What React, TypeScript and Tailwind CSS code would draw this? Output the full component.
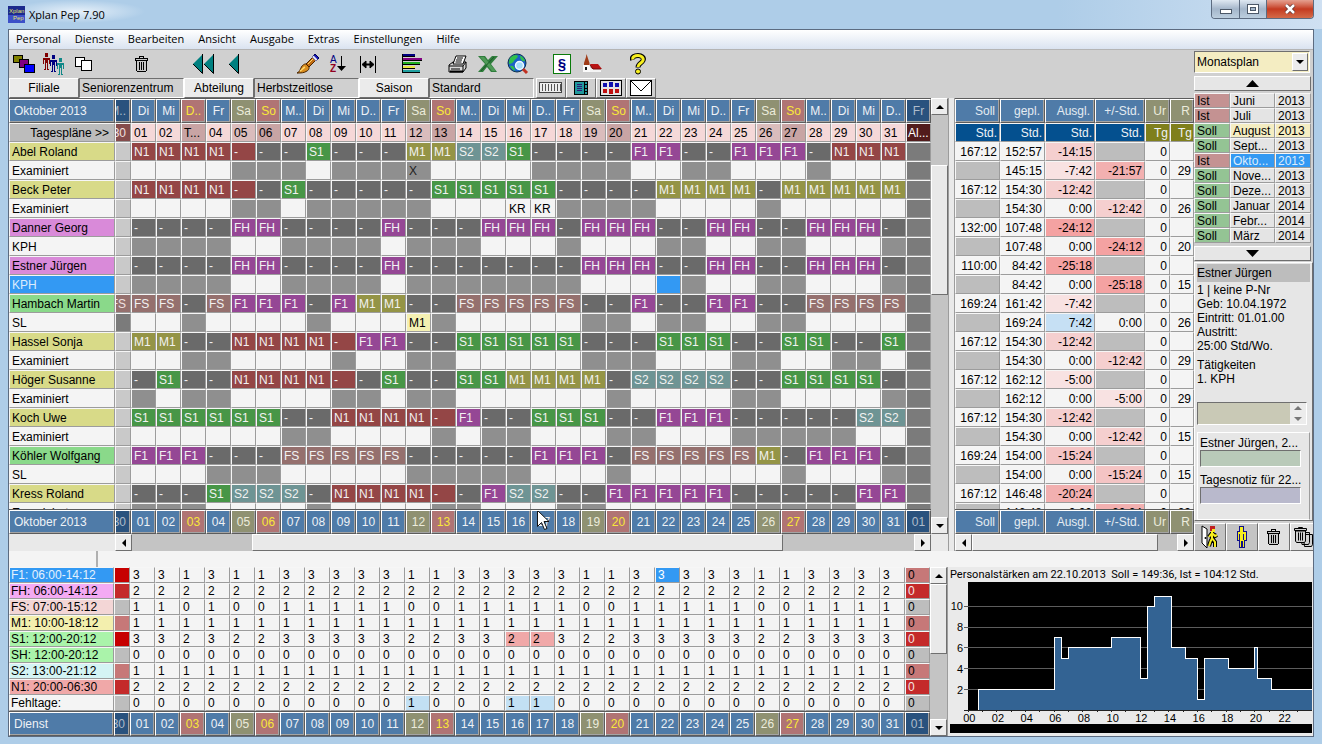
import type { ReactNode } from 'react';

const DAYS = Array.from({ length: 31 }, (_, i) => i + 1);
const WEEKDAYS = ['M..', 'Di', 'Mi', 'D..', 'Fr', 'Sa', 'So'];

const pad = (n: number) => String(n).padStart(2, '0');

type DayKind = 'work' | 'sat' | 'sun';

const dayKind = (day: number): DayKind => {
  const wd = day % 7;
  if (day === 3 || wd === 6) return 'sun';
  if (wd === 5) return 'sat';
  return 'work';
};

const headColor: Record<DayKind, string> = {
  work: 'bg-[#4f7ba8] text-[#eef2f6]',
  sat: 'bg-[#8f9172] text-[#ececdc]',
  sun: 'bg-[#b07474] text-[#f8e838]',
};

const dateColor: Record<DayKind, string> = {
  work: 'bg-[#f5d8d8]',
  sat: 'bg-[#dabcbc]',
  sun: 'bg-[#c8a4a4]',
};

const dutyColor: Record<string, string> = {
  N1: 'bg-[#944646]',
  r: 'bg-[#944646]',
  S1: 'bg-[#479647]',
  S2: 'bg-[#6e9494]',
  F1: 'bg-[#954795]',
  FH: 'bg-[#954795]',
  FS: 'bg-[#95706e]',
  M1: 'bg-[#949446]',
  '-': 'bg-[#6a6a6a]',
};

type Person = {
  name: string;
  role: string;
  color: string;
  duties: string;
  notes?: Record<number, string>;
  prev?: string;
  first: string[];
  second: string[];
};

const YELLOW = 'bg-[#d8da88]';
const PINK = 'bg-[#d98ad9]';
const GREEN = 'bg-[#8ad98a]';

const people: Person[] = [
  {
    name: 'Abel Roland', role: 'Examiniert', color: YELLOW,
    duties: 'N1 N1 N1 N1 r - - S1 - - - M1 M1 S2 S2 S1 - - - - F1 F1 - - F1 F1 F1 - N1 N1 N1',
    notes: { 12: 'X' },
    first: ['167:12', '152:57', '-14:15', '', '0', ''],
    second: ['', '145:15', '-7:42', '-21:57', '0', '29'],
  },
  {
    name: 'Beck Peter', role: 'Examiniert', color: YELLOW,
    duties: 'N1 N1 N1 N1 r - S1 - - - - - S1 S1 S1 S1 S1 - - - - M1 M1 M1 M1 - M1 M1 M1 M1 M1',
    notes: { 16: 'KR', 17: 'KR' },
    first: ['167:12', '154:30', '-12:42', '', '0', ''],
    second: ['', '154:30', '0:00', '-12:42', '0', '26'],
  },
  {
    name: 'Danner Georg', role: 'KPH', color: PINK,
    duties: '- - - - FH FH - - - - FH - - - FH FH FH - FH FH FH - - FH FH - - FH FH FH -',
    first: ['132:00', '107:48', '-24:12', '', '0', ''],
    second: ['', '107:48', '0:00', '-24:12', '0', '20'],
  },
  {
    name: 'Estner Jürgen', role: 'KPH', color: PINK,
    duties: '- - - - FH FH - - - - FH - - - - - - - FH FH FH - - FH FH - - FH FH FH -',
    notes: { 22: 'sel' },
    first: ['110:00', '84:42', '-25:18', '', '0', ''],
    second: ['', '84:42', '0:00', '-25:18', '0', '15'],
  },
  {
    name: 'Hambach Martin', role: 'SL', color: GREEN, prev: 'FS',
    duties: 'FS FS - FS F1 F1 F1 - F1 M1 M1 - - FS FS FS FS FS - - F1 - - F1 F1 - - FS FS FS FS',
    notes: { 12: 'M1' },
    first: ['169:24', '161:42', '-7:42', '', '0', ''],
    second: ['', '169:24', '7:42', '0:00', '0', '26'],
  },
  {
    name: 'Hassel Sonja', role: 'Examiniert', color: YELLOW,
    duties: 'M1 M1 - - N1 N1 N1 N1 r F1 F1 - - S1 S1 S1 S1 S1 - - - S1 S1 S1 - - S1 S1 - - S1',
    first: ['167:12', '154:30', '-12:42', '', '0', ''],
    second: ['', '154:30', '0:00', '-12:42', '0', '29'],
  },
  {
    name: 'Höger Susanne', role: 'Examiniert', color: YELLOW,
    duties: '- S1 - - N1 N1 N1 N1 r - S1 - - S1 S1 M1 M1 M1 M1 - S2 S2 S2 S2 - - S1 S1 S1 S1 -',
    first: ['167:12', '162:12', '-5:00', '', '0', ''],
    second: ['', '162:12', '0:00', '-5:00', '0', '29'],
  },
  {
    name: 'Koch Uwe', role: 'Examiniert', color: YELLOW,
    duties: 'S1 S1 S1 S1 S1 S1 - - N1 N1 N1 N1 r F1 - - S1 S1 S1 - - F1 F1 F1 - - - - - S2 S2',
    first: ['167:12', '154:30', '-12:42', '', '0', ''],
    second: ['', '154:30', '0:00', '-12:42', '0', '15'],
  },
  {
    name: 'Köhler Wolfgang', role: 'SL', color: GREEN,
    duties: 'F1 F1 F1 - - - FS FS FS FS FS - - - - - F1 F1 F1 - FS FS FS FS FS M1 - F1 F1 F1 -',
    first: ['169:24', '154:00', '-15:24', '', '0', ''],
    second: ['', '154:00', '0:00', '-15:24', '0', '15'],
  },
  {
    name: 'Kress Roland', role: 'Examiniert', color: YELLOW,
    duties: '- - - S1 S2 S2 S2 - N1 N1 N1 N1 r - F1 S2 S2 - - F1 F1 F1 F1 F1 - - - - - F1 F1',
    first: ['167:12', '146:48', '-20:24', '', '0', ''],
    second: ['', '146:48', '0:00', '-20:24', '0', '29'],
  },
];

const C0 = 'bg-[#c60000] text-[#e06060]';
const C1 = 'bg-[#c42a2a] text-[#f4e6e6]';
const C2 = 'bg-[#c67878]';
const C3 = 'bg-[#bdbdbd]';

const shifts = [
  { label: 'F1: 06:00-14:12', color: 'bg-[#3399f3] text-[#e4f1fd]', prev: C0, next: C2, week: 3, weekend: 1 },
  { label: 'FH: 06:00-14:12', color: 'bg-[#f3aaf3]', prev: C1, next: C1, week: 2, weekend: 2 },
  { label: 'FS: 07:00-15:12', color: 'bg-[#f3d6d6]', prev: C3, next: C3, week: 1, weekend: 0 },
  { label: 'M1: 10:00-18:12', color: 'bg-[#f3efae]', prev: C2, next: C2, week: 1, weekend: 1 },
  { label: 'S1: 12:00-20:12', color: 'bg-[#aaf3aa]', prev: C0, next: C1, week: 3, weekend: 2 },
  { label: 'SH: 12:00-20:12', color: 'bg-[#aaf3aa]', prev: C3, next: C3, week: 0, weekend: 0 },
  { label: 'S2: 13:00-21:12', color: 'bg-[#d4f4f4]', prev: C2, next: C2, week: 1, weekend: 1 },
  { label: 'N1: 20:00-06:30', color: 'bg-[#f0a8a8]', prev: C1, next: C1, week: 2, weekend: 2 },
  { label: 'Fehltage:', color: 'bg-[#f4f4f4]', prev: C3, next: C3, week: 0, weekend: 0 },
];

const months = [
  ['Ist', 'Juni', '2013'],
  ['Ist', 'Juli', '2013'],
  ['Soll', 'August', '2013'],
  ['Soll', 'Sept...', '2013'],
  ['Ist', 'Okto...', '2013'],
  ['Soll', 'Nove...', '2013'],
  ['Soll', 'Deze...', '2013'],
  ['Soll', 'Januar', '2014'],
  ['Soll', 'Febr...', '2014'],
  ['Soll', 'März', '2014'],
];

const staffing = [
  [0, 0], [0.75, 2], [6, 7], [6.5, 5], [7, 6], [10, 7], [12, 3], [12.5, 10], [13, 11], [14.2, 6],
  [15.2, 5], [16, 1], [16.5, 5], [18.2, 4], [20, 6], [20.2, 3], [21.2, 2],
];

const RAISED = 'border border-t-white border-l-white border-r-[#6f6f6f] border-b-[#6f6f6f]';
const SUNKEN = 'border border-t-[#6f6f6f] border-l-[#6f6f6f] border-r-white border-b-white';
const CELL = 'overflow-hidden whitespace-nowrap border border-t-[#f6f6f6] border-l-[#f6f6f6] border-r-[#9c9c9c] border-b-[#9c9c9c]';
const ROW = 'pt-px leading-4';
const HEAD = 'h-6 overflow-hidden whitespace-nowrap border border-t-white border-l-white border-r-[#5c5c5c] border-b-[#5c5c5c] font-normal shadow-[inset_-1px_-1px_0_#a4a4a4]';
const DIM = 'bg-[#29527e] text-[#aebccb]';

/* ---------- scrollbars ---------- */

const Arrow = ({ dir }: { dir: 'up' | 'down' | 'left' | 'right' }) => {
  const d = {
    up: 'M0 6 L4 2 L8 6z',
    down: 'M0 2 L4 6 L8 2z',
    left: 'M6 0 L2 4 L6 8z',
    right: 'M2 0 L6 4 L2 8z',
  }[dir];
  return (
    <svg width="8" height="8" viewBox="0 0 8 8">
      <path d={d} fill="#000" />
    </svg>
  );
};

type ScrollProps = { vertical?: boolean; parts: [number, number, number] };

const Scrollbar = ({ vertical, parts }: ScrollProps) => {
  const btn = `flex shrink-0 items-center justify-center bg-[#ececec] ${RAISED} ${vertical ? 'h-[17px] w-full' : 'h-full w-[17px]'}`;
  return (
    <div className={`flex bg-[#c4c4c4] ${vertical ? 'w-[17px] shrink-0 flex-col' : 'h-[17px] flex-1'}`}>
      <button className={btn} aria-label="zurück"><Arrow dir={vertical ? 'up' : 'left'} /></button>
      <div className="basis-0" style={{ flexGrow: parts[0] }} />
      <div className={`basis-0 bg-[#e9e9e9] ${RAISED}`} style={{ flexGrow: parts[1] }} />
      <div className="basis-0" style={{ flexGrow: parts[2] }} />
      <button className={btn} aria-label="weiter"><Arrow dir={vertical ? 'down' : 'right'} /></button>
    </div>
  );
};

/* ---------- toolbar icons ---------- */

const Figure = ({ x, y, color }: { x: number; y: number; color: string }) => (
  <g transform={`translate(${x} ${y})`} fill={color}>
    <rect x="2" y="0" width="3" height="4" />
    <path d="M0 5h7v6h-1v-4h-1v9h1v1h-2v-7h-1v7h-2v-1h1v-9h-1v4h-1z" />
  </g>
);

const IconWindows = () => (
  <svg width="22" height="18" viewBox="0 0 22 18" shapeRendering="crispEdges" stroke="#000">
    <rect x="0.5" y="0.5" width="9" height="7" fill="#808000" />
    <rect x="6.5" y="4.5" width="9" height="8" fill="#800080" />
    <rect x="11.5" y="9.5" width="10" height="8" fill="#0000ff" />
  </svg>
);

const IconPeople = () => (
  <svg width="22" height="22" viewBox="0 0 22 22" shapeRendering="crispEdges">
    <Figure x={0} y={0} color="#800000" />
    <Figure x={7} y={2} color="#000080" />
    <Figure x={14} y={5} color="#108888" />
  </svg>
);

const IconPages = () => (
  <svg width="18" height="14" viewBox="0 0 18 14" shapeRendering="crispEdges" stroke="#000" fill="#fff">
    <rect x="0.5" y="0.5" width="9" height="9" />
    <rect x="6.5" y="3.5" width="10" height="10" />
  </svg>
);

const IconTrash = () => (
  <svg width="14" height="16" viewBox="0 0 14 16" shapeRendering="crispEdges" fill="none" stroke="#000">
    <path d="M4.5 2V0.5h4V2" />
    <path d="M0.5 4.5v-2h12v2z" fill="#c8c8c8" />
    <path d="M1.5 5v9.5l1 1h8l1-1V5" fill="#c8c8c8" />
    <path d="M4.5 6v8M6.500 6v8M8.500 6v8" />
  </svg>
);

const IconPrev = ({ double }: { double?: boolean }) => (
  <svg width={double ? 24 : 12} height="20" viewBox={double ? '0 0 24 20' : '0 0 12 20'}>
    <path d="M10.500 0.500 L1 10 L10.500 19.500z" fill="#008080" />
    <path d="M10.500 0 V19.500 L1 10" fill="none" stroke="#000" />
    {double && <path d="M21.500 0.500 L12 10 L21.500 19.500z" fill="#008080" />}
    {double && <path d="M21.500 0 V19.500 L12 10" fill="none" stroke="#000" />}
  </svg>
);

const IconBrush = () => (
  <svg width="24" height="20" viewBox="0 0 24 20">
    <path d="M1 19c3-1 3-4 5-7 2-2 4-3 6-1 2 2 1 5-1 6-3 2-6 2-10 2z" fill="#d98c1c" stroke="#4a2500" />
    <path d="M4 17c2-1 3-3 5-4" stroke="#ffd76a" fill="none" strokeWidth="1.5" />
    <path d="M10 10 L17 3 L20 6 L13 13z" fill="#c06a10" stroke="#4a2500" />
    <path d="M12 10l5-5" stroke="#ffd76a" />
    <path d="M16 3l3-3 4 4-3 3z" fill="#1414b4" stroke="#000050" />
    <path d="M16 3l1.500-1.500 4 4L20 7z" fill="#e8e8f4" />
  </svg>
);

const IconSort = () => (
  <svg width="18" height="18" viewBox="0 0 18 18">
    <text x="1" y="8" fontSize="10" fill="#000080" fontFamily="Liberation Sans">A</text>
    <text x="1" y="17" fontSize="10" fill="#900020" fontFamily="Liberation Sans" fontWeight="bold">Z</text>
    <path d="M12.500 1v11" stroke="#000" />
    <path d="M8 11h9l-4.500 5z" />
  </svg>
);

const IconWidth = () => (
  <svg width="18" height="18" viewBox="0 0 18 18" stroke="#000">
    <path d="M1.500 1v17M16.500 1v17" />
    <path d="M5 9.500h8" strokeWidth="2" />
    <path d="M3 9.500l4-3.500v7zM15 9.500l-4-3.500v7z" />
  </svg>
);

const IconBars = () => (
  <svg width="20" height="20" viewBox="0 0 20 20" shapeRendering="crispEdges">
    <path d="M0 0h1v19h-1z" />
    <rect x="1" y="0" width="12" height="2" fill="#000080" />
    <rect x="1" y="4" width="19" height="3" fill="#800080" />
    <rect x="1" y="8" width="17" height="3" fill="#20b020" />
    <rect x="1" y="12" width="12" height="3" fill="#e8e840" />
    <rect x="1" y="16" width="17" height="3" fill="#20a0a0" />
    <path d="M1 2.500h12M1 6.500h19M1 10.500h17M1 14.500h12M1 18.500h17" stroke="#000" />
  </svg>
);

const IconPrinter = () => (
  <svg width="20" height="18" viewBox="0 0 20 18" stroke="#000">
    <path d="M1 10l4-3h13v6l-3 4H1z" fill="#d8d8d8" />
    <path d="M1 11h14l3-4M15 11v6" fill="none" />
    <path d="M5 9l3-8h10l-3 8z" fill="#fff" />
    <path d="M9 3h6M8 5h6M7.500 7h6M3 14h9" fill="none" />
    <path d="M2 16.500h13" strokeWidth="2" />
  </svg>
);

const IconExcel = () => (
  <svg width="20" height="16" viewBox="0 0 20 16">
    <path d="M0 0h7l3 4 4-4h6l-7 8 6 8h-6l-4-5-4 5H0l7-8z" fill="#2f7d3c" />
    <path d="M2 1h4l12 14h-4z" fill="#4f9a57" />
    <path d="M16 1L3 15" stroke="#1c5a28" />
  </svg>
);

const IconGlobe = () => (
  <svg width="22" height="22" viewBox="0 0 22 22">
    <circle cx="10" cy="10" r="9" fill="#1b62c8" stroke="#0b3050" />
    <path d="M3 5c3-3 6-4 8-2-1 3-3 3-4 5s-3 3-5 3c0-2 0-4 1-6zM3 13c3-1 5 1 5 5-2-1-4-3-5-5zM13 3c2 0 4 2 5 5-2 1-5-1-5-5z" fill="#2fc04a" />
    <path d="M16 16l4 4" stroke="#c03020" strokeWidth="3" />
    <circle cx="12.500" cy="12.500" r="4" fill="#a4dcfa" stroke="#f0faff" strokeWidth="1.500" />
  </svg>
);

const IconParagraph = () => (
  <svg width="18" height="20" viewBox="0 0 18 20">
    <rect x="0.500" y="0.500" width="17" height="19" fill="#fff" stroke="#0a7a0a" />
    <text x="9" y="15" textAnchor="middle" fontSize="15" fontWeight="bold" fill="#000080" fontFamily="Liberation Sans">§</text>
  </svg>
);

const IconChurch = () => (
  <svg width="20" height="20" viewBox="0 0 20 20">
    <path d="M4.500 0l1 3 2 6v2H2V9l2-6z" fill="#a03c18" />
    <path d="M1 11h7v7H1z" fill="#fafafa" />
    <path d="M8 14h11v4H8z" fill="#f4f4f4" />
    <path d="M8 10h8l4 5H10z" fill="#b81414" />
    <path d="M8 11l3 4h8" stroke="#701010" fill="none" />
    <rect x="3" y="13" width="2" height="3" fill="#1a1a1a" />
  </svg>
);

const IconHelp = () => (
  <svg width="16" height="22" viewBox="0 0 16 22">
    <path d="M2.500 7c-1-3 2-4.500 5.500-4.500s6.500 2 5 5-5 3-5 7" fill="none" stroke="#000" strokeWidth="5" />
    <path d="M3 6.500c-1-2.500 2-4 5-4s6 2 5 5-5 3-5 6.500" fill="none" stroke="#f6ee1e" strokeWidth="3" />
    <circle cx="8" cy="18.500" r="2.500" fill="#f6ee1e" stroke="#000" />
  </svg>
);

const ToolButton = ({ label, children }: { label: string; children: ReactNode }) => (
  <button aria-label={label} className="flex h-7 w-[30px] items-center justify-center">
    {children}
  </button>
);

const menuItems = ['Personal', 'Dienste', 'Bearbeiten', 'Ansicht', 'Ausgabe', 'Extras', 'Einstellungen', 'Hilfe'];

const TitleBar = () => (
  <header className="flex h-[29px] items-start justify-between bg-linear-to-r from-transparent via-transparent via-80% to-[#cfe0f2] pl-2">
    <div className="flex items-center gap-1 rounded-full bg-[radial-gradient(closest-side,#e6f0f9,#aecde8)] pt-[6px] pr-10">
      <svg width="17" height="17" viewBox="0 0 17 17">
        <rect width="17" height="17" fill="#1c2a8c" />
        <rect y="9" width="17" height="8" fill="#3c50c8" />
        <text x="1" y="7" fontSize="6" fill="#e8e070" fontFamily="Liberation Sans">Xplan</text>
        <text x="5" y="14" fontSize="6" fill="#e8e070" fontFamily="Liberation Sans">Pep</text>
      </svg>
      <h1 className="font-['Open_Sans',sans-serif] text-[11px] leading-[17px] text-black">Xplan Pep 7.90</h1>
    </div>
    <div className="mr-2 flex h-[19px] overflow-hidden rounded-b border border-t-0 border-[#5c6b80]">
      <button aria-label="Minimieren" className="flex w-7 items-center justify-center border-r border-[#5c6b80] bg-linear-to-b from-[#dfe8f2] via-[#a4b6ca] to-[#bccede] pt-1">
        <svg width="12" height="5" viewBox="0 0 12 5"><rect x="0.500" y="0.500" width="11" height="4" fill="#fff" stroke="#4c5868" /></svg>
      </button>
      <button aria-label="Maximieren" className="flex w-[27px] items-center justify-center border-r border-[#5c6b80] bg-linear-to-b from-[#dfe8f2] via-[#a4b6ca] to-[#bccede]">
        <svg width="12" height="10" viewBox="0 0 12 10"><rect x="0.500" y="0.500" width="11" height="9" fill="#fff" stroke="#4c5868" /><rect x="3.500" y="3.500" width="5" height="3" fill="#a4b6ca" stroke="#4c5868" /></svg>
      </button>
      <button aria-label="Schließen" className="flex w-[46px] items-center justify-center bg-linear-to-b from-[#e4a090] via-[#c43a20] to-[#d46a48]">
        <svg width="12" height="10" viewBox="0 0 12 10"><path d="M2 1l8 8M10 1L2 9" stroke="#5c3030" strokeWidth="4" /><path d="M2 1l8 8M10 1L2 9" stroke="#fff" strokeWidth="2.500" /></svg>
      </button>
    </div>
  </header>
);

const Toolbar = () => (
  <div className="flex h-7 items-center">
    <ToolButton label="Fenster"><IconWindows /></ToolButton>
    <ToolButton label="Personal"><IconPeople /></ToolButton>
    <ToolButton label="Kopieren"><IconPages /></ToolButton>
    <div className="ml-7 flex"><ToolButton label="Löschen"><IconTrash /></ToolButton></div>
    <div className="ml-8 flex">
      <ToolButton label="Anfang"><IconPrev double /></ToolButton>
      <ToolButton label="Zurück"><IconPrev /></ToolButton>
    </div>
    <div className="ml-11 flex">
      <ToolButton label="Pinsel"><IconBrush /></ToolButton>
      <ToolButton label="Sortieren"><IconSort /></ToolButton>
      <ToolButton label="Breite"><IconWidth /></ToolButton>
    </div>
    <div className="ml-[14px] flex"><ToolButton label="Balken"><IconBars /></ToolButton></div>
    <div className="ml-4 flex">
      <ToolButton label="Drucken"><IconPrinter /></ToolButton>
      <ToolButton label="Excel"><IconExcel /></ToolButton>
      <ToolButton label="Internet"><IconGlobe /></ToolButton>
    </div>
    <div className="ml-[14px] flex">
      <ToolButton label="Regeln"><IconParagraph /></ToolButton>
      <ToolButton label="Feiertage"><IconChurch /></ToolButton>
    </div>
    <div className="ml-4 flex"><ToolButton label="Hilfe"><IconHelp /></ToolButton></div>
  </div>
);

const viewIcons = [
  <svg key="g" width="24" height="12" viewBox="0 0 24 12" shapeRendering="crispEdges"><rect x="0.500" y="0.500" width="22" height="10" fill="#eee" stroke="#444" /><path d="M3 2v7M6 2v7M9 2v7M12 2v7M15 2v7M18 2v7M21 2v7" stroke="#555" /></svg>,
  <svg key="b" width="14" height="14" viewBox="0 0 14 14" shapeRendering="crispEdges"><rect x="0.500" y="0.500" width="13" height="13" fill="#20989c" stroke="#000" /><path d="M3 3.500h5M3 5.500h5M3 7.500h5M3 9.500h5" stroke="#301878" /><path d="M10.500 0v14M11 3.500h3M11 7.500h3M11 10.500h3" stroke="#000" /></svg>,
  <svg key="p" width="22" height="16" viewBox="0 0 22 16" shapeRendering="crispEdges"><rect x="0.500" y="0.500" width="21" height="15" fill="#e4e4e4" stroke="#000" /><path d="M3 3h4v4h-4zM9 2h4v5h-4zM15 3h4v4h-4z" fill="#1010b0" /><path d="M3 9h4v4h-4zM9 9h4v5h-4zM15 9h4v4h-4z" fill="#c01010" /></svg>,
  <svg key="m" width="22" height="16" viewBox="0 0 22 16"><rect x="0.500" y="0.500" width="21" height="15" fill="#fff" stroke="#000" /><path d="M1 1l10 10 10-10" fill="none" stroke="#000" /></svg>,
];

const Filters = () => (
  <div className="flex h-5 items-center">
    {[['Filiale', 'Seniorenzentrum'], ['Abteilung', 'Herbstzeitlose'], ['Saison', 'Standard']].map(([label, value]) => (
      <div key={label} className="flex h-full w-[175px]">
        <button className={`w-[70px] bg-[#ebebeb] leading-[17px] ${RAISED}`}>{label}</button>
        <input readOnly aria-label={label} value={value} className={`w-[105px] bg-[#d0d0d0] px-[2px] outline-none ${SUNKEN}`} />
      </div>
    ))}
    <div className="ml-[2px] flex h-full">
      {viewIcons.map((icon) => (
        <button key={icon.key} aria-label={`Ansicht ${icon.key}`} className={`flex w-[30px] items-center justify-center bg-[#cfcfcf] ${RAISED}`}>{icon}</button>
      ))}
    </div>
  </div>
);

/* ---------- roster ---------- */

const RosterCols = ({ name }: { name: string }) => (
  <colgroup>
    <col className={name} />
    <col className="w-4" />
    {DAYS.map((d) => <col key={d} />)}
    <col className="w-[25px]" />
  </colgroup>
);

const TABLE = 'w-full table-fixed border-separate border-spacing-0';

const Clipped = ({ children }: { children: ReactNode }) => (
  <div className="flex justify-end pr-1"><span>{children}</span></div>
);

const Cursor = () => (
  <svg className="absolute -top-px left-[5px]" width="13" height="21" viewBox="0 0 13 21">
    <path d="M0.500 0.500v16l4-4 3 7 2.500-1-3-7h5z" fill="#fff" stroke="#111" />
  </svg>
);

const DateFooter = ({ title, name, cursor }: { title: string; name: string; cursor?: boolean }) => (
  <table className={`${TABLE} border-t border-[#5c5c5c]`}>
    <RosterCols name={name} />
    <tbody>
      <tr>
        <th className={`${HEAD} bg-[#4f7ba8] pl-1 text-left text-[#eef2f6]`}>{title}</th>
        <th className={`${HEAD} ${DIM}`}><Clipped>30</Clipped></th>
        {DAYS.map((d) => (
          <th key={d} className={`${HEAD} ${headColor[dayKind(d)]} relative`}>
            {pad(d)}
            {cursor && d === 17 && <Cursor />}
          </th>
        ))}
        <th className={`${HEAD} ${DIM}`}>01</th>
      </tr>
    </tbody>
  </table>
);

const noteClass = (note: string | undefined, duty: string) => {
  if (note === 'sel') return 'bg-[#3399f3]';
  if (note === 'M1') return 'bg-[#f4f0b2]';
  if (note === 'X' || duty === '-' || duty === 'r') return 'bg-[#8f8f8f] text-[#222]';
  return 'bg-[#f4f4f4]';
};

const PersonRows = ({ person }: { person: Person }) => {
  const duties = person.duties.split(' ');
  const selected = person.name === 'Estner Jürgen';
  return (
    <>
      <tr>
        <td className={`${CELL} ${ROW} h-[19px] pl-[2px] ${person.color}`}>{person.name}</td>
        <td className={`${CELL} ${ROW} ${person.prev ? 'bg-[#95706e] text-[#f0e0e0]' : 'bg-[#c9c9c9]'}`}>
          <Clipped>{person.prev}</Clipped>
        </td>
        {duties.map((duty, i) => (
          <td key={i} className={`${CELL} ${ROW} pl-[2px] text-[#f2f2f2] ${dutyColor[duty]}`}>
            {duty === 'r' ? '-' : duty}
          </td>
        ))}
        <td className={`${CELL} bg-[#7b7b7b]`} />
      </tr>
      <tr>
        <td className={`${CELL} ${ROW} h-[19px] pl-[2px] ${selected ? 'bg-[#3399f3] text-[#dcecfc]' : 'bg-[#f4f4f4]'}`}>{person.role}</td>
        <td className={`${CELL} ${person.prev ? 'bg-[#7b7b7b]' : 'bg-[#c9c9c9]'}`} />
        {duties.map((duty, i) => {
          const note = person.notes?.[i + 1];
          return (
            <td key={i} className={`${CELL} ${ROW} pl-[2px] ${noteClass(note, duty)}`}>
              {note === 'sel' ? '' : note}
            </td>
          );
        })}
        <td className={`${CELL} bg-[#7b7b7b]`} />
      </tr>
    </>
  );
};

const Roster = () => (
  <section className="flex min-w-0 flex-1 flex-col">
    <div className="min-h-0 flex-1 overflow-hidden border-t border-[#5c5c5c]">
      <table className={TABLE}>
        <RosterCols name="w-[106px]" />
        <thead>
          <tr>
            <th className={`${HEAD} bg-[#4f7ba8] pl-1 text-left text-[#eef2f6]`}>Oktober 2013</th>
            <th className={`${HEAD} ${DIM}`}><Clipped>M..</Clipped></th>
            {DAYS.map((d) => (
              <th key={d} className={`${HEAD} ${headColor[dayKind(d)]}`}>{WEEKDAYS[d % 7]}</th>
            ))}
            <th className={`${HEAD} ${DIM}`}>Fr</th>
          </tr>
          <tr>
            <th className={`${CELL} ${ROW} h-[19px] bg-[#bcbcbc] pr-[5px] text-right font-normal`}>Tagespläne &gt;&gt;</th>
            <th className={`${CELL} ${ROW} bg-[#854c4c] font-normal text-[#f0e0e0]`}><Clipped>30</Clipped></th>
            {DAYS.map((d) => (
              <th key={d} className={`${CELL} ${ROW} pl-[2px] text-left font-normal ${dateColor[dayKind(d)]}`}>
                {d === 3 ? 'T...' : pad(d)}
              </th>
            ))}
            <th className={`${CELL} ${ROW} bg-[#521c1c] pl-px text-left font-normal text-white`}>Al...</th>
          </tr>
        </thead>
        <tbody>
          {people.map((p) => <PersonRows key={p.name} person={p} />)}
        </tbody>
      </table>
    </div>
    <DateFooter title="Oktober 2013" name="w-[106px]" cursor />
    <div className="flex bg-[#e9e9e9] pl-[106px]">
      <Scrollbar parts={[121, 531, 132]} />
    </div>
  </section>
);

/* ---------- hours ---------- */

const statHead = ['Soll', 'gepl.', 'Ausgl.', '+/-Std.', 'Ur', 'R'];

const StatCols = () => (
  <colgroup>
    <col className="w-[45px]" />
    <col className="w-[45px]" />
    <col className="w-[50px]" />
    <col className="w-[50px]" />
    <col className="w-[25px]" />
    <col className="w-6" />
  </colgroup>
);

const statColor = (value: string, col: number) => {
  if (value === '' && (col === 0 || col === 3)) return 'bg-[#bdbdbd]';
  if (value === '7:42') return 'bg-[#c6e0f4]';
  if (col < 2 || !value.startsWith('-')) return 'bg-[#f4f4f4]';
  const hours = parseInt(value.slice(1), 10);
  if (hours > 23) return 'bg-[#f4a2a2]';
  if (hours > 19) return 'bg-[#f2b0b0]';
  if (hours > 14) return 'bg-[#f4c4c4]';
  if (hours > 10) return 'bg-[#f5cfcf]';
  return 'bg-[#f8e2e2]';
};

const StatHeadRow = () => (
  <tr>
    {statHead.map((h, i) => (
      <th key={h} className={`${HEAD} text-right ${i > 3 ? 'bg-[#8f9172] pr-[3px] text-[#ececdc]' : 'bg-[#4f7ba8] pr-1 text-[#e4ebf2]'}`}>{h}</th>
    ))}
  </tr>
);

const Hours = () => (
  <section className="flex w-[239px] shrink-0 flex-col">
    <div className="min-h-0 flex-1 overflow-hidden border-t border-[#5c5c5c]">
      <table className={TABLE}>
        <StatCols />
        <thead>
          <StatHeadRow />
          <tr>
            {['Std.', 'Std.', 'Std.', 'Std.', 'Tg', 'Tg'].map((h, i) => (
              <th key={i} className={`${CELL} ${ROW} h-[19px] text-right font-normal text-[#eef2f6] ${i > 3 ? 'bg-[#7f7f1c] pr-px' : 'bg-[#04508f] pr-[2px]'}`}>{h}</th>
            ))}
          </tr>
        </thead>
        <tbody>
          {people.flatMap((p) => [p.first, p.second]).map((row, r) => (
            <tr key={r}>
              {row.map((value, c) => (
                <td key={c} className={`${CELL} ${ROW} h-[19px] pr-[2px] text-right ${statColor(value, c)}`}>{value}</td>
              ))}
            </tr>
          ))}
        </tbody>
      </table>
    </div>
    <table className={`${TABLE} border-t border-[#5c5c5c]`}>
      <StatCols />
      <tbody><StatHeadRow /></tbody>
    </table>
    <div className="flex"><Scrollbar parts={[0, 187, 19]} /></div>
  </section>
);

/* ---------- sidebar ---------- */

const BigArrow = ({ down }: { down?: boolean }) => (
  <svg width="13" height="7" viewBox="0 0 13 7"><path d={down ? 'M0 0h13L6.500 7z' : 'M0 7h13L6.500 0z'} /></svg>
);

const IconDoor = () => (
  <svg width="18" height="24" viewBox="0 0 18 24">
    <path d="M1 1h7v17H1z" fill="#c4c4c4" />
    <path d="M1 1l5 3v19l-5-5z" fill="#fff" stroke="#000" />
    <circle cx="4.500" cy="13" r="1" />
    <path d="M11 7v6l-1 3M11 8l-3 4M11 8l3 3 2-1M11 13l3 4v5M10 15l-2 6" stroke="#000" strokeWidth="4" fill="none" />
    <path d="M11 7v6l-1 3M11 8l-3 4M11 8l3 3 2-1M11 13l3 4v5M10 15l-2 6" stroke="#f6ee1e" strokeWidth="2" fill="none" />
    <rect x="10" y="3" width="4" height="4" fill="#f6ee1e" />
    <path d="M9 1h5v3h-3v2H9z" fill="#c02020" />
  </svg>
);

const IconMan = () => (
  <svg width="12" height="22" viewBox="0 0 12 22" shapeRendering="crispEdges">
    <path d="M3.500 0.500h4v5h3v9h-2v7h-2v-6h-1v6h-2v-7h-2v-9h2z" fill="#f6ee1e" stroke="#10108c" />
    <path d="M3.500 8v6M7.500 8v6" stroke="#10108c" />
  </svg>
);

const IconTrashes = () => (
  <svg width="20" height="20" viewBox="0 0 20 20" fill="#d0d0d0" stroke="#000">
    <path d="M9 7.500h9.500v10l-1 2h-7zM6 5.500h9.500v10l-1 2H8z" />
    <path d="M1.500 4v10l1 1.500h8l1-1.500V4z" />
    <path d="M0.500 1.500h12v2h-12zM4.500 5.500v8M6.500 5.500v8M8.500 5.500v8M4.500 1V0.500h4v1" />
  </svg>
);

const Sidebar = () => (
  <aside className="flex w-[119px] shrink-0 flex-col overflow-hidden bg-[#d0d0d0] pt-px">
    <div className="relative mr-[3px]">
      <select aria-label="Ansicht" className={`h-[22px] w-full appearance-none bg-[#f4edc2] px-[2px] outline-none ${SUNKEN}`}>
        <option>Monatsplan</option>
      </select>
      <span className={`pointer-events-none absolute top-[2px] right-[2px] flex h-[18px] w-4 items-center justify-center bg-[#ececec] ${RAISED}`}>
        <Arrow dir="down" />
      </span>
    </div>
    <button aria-label="Früher" className={`mt-[3px] mr-[2px] flex h-[15px] items-center justify-center bg-[#e6e6e6] ${RAISED}`}><BigArrow /></button>
    <table className="mt-[2px] mr-[2px] w-[117px] table-fixed border-separate border-spacing-0">
      <colgroup>
        <col className="w-[36px]" />
        <col className="w-[45px]" />
        <col className="w-[36px]" />
      </colgroup>
      <tbody>
        {months.map(([kind, month, year]) => {
          const color = month === 'Okto...' ? 'bg-[#3399f3] text-[#dcecfc]' : month === 'August' ? 'bg-[#f4edc2]' : 'bg-[#e4e4e4]';
          return (
            <tr key={month}>
              <td className={`${CELL} h-[15px] pt-px pl-[2px] leading-3 ${kind === 'Ist' ? 'bg-[#c49292]' : 'bg-[#94c494]'}`}>{kind}</td>
              <td className={`${CELL} pt-px pl-[2px] leading-3 ${color}`}>{month}</td>
              <td className={`${CELL} pt-px pl-[2px] leading-3 ${color}`}>{year}</td>
            </tr>
          );
        })}
      </tbody>
    </table>
    <button aria-label="Später" className={`mt-[3px] mr-[2px] flex h-[15px] items-center justify-center bg-[#e6e6e6] ${RAISED}`}><BigArrow down /></button>
    <div className={`mt-px flex flex-1 flex-col bg-[#e6e6e6] px-[2px] pt-px leading-[14px] ${RAISED}`}>
      <h2 className="h-[18px] bg-[#bdbdbd] leading-[18px]">Estner Jürgen</h2>
      <p className="mt-px">1 | keine P-Nr</p>
      <p>Geb: 10.04.1972</p>
      <p>Eintritt: 01.01.00</p>
      <p>Austritt:</p>
      <p>25:00 Std/Wo.</p>
      <p className="mt-[5px]">Tätigkeiten</p>
      <p>1. KPH</p>
      <div className={`mt-4 mr-[3px] flex h-[23px] ${SUNKEN}`}>
        <textarea aria-label="Notiz" className="min-w-0 flex-1 resize-none bg-[#c9c9b6] outline-none" />
        <div className="flex w-4 flex-col items-center justify-around bg-[#ececec]">
          <svg width="8" height="4" viewBox="0 0 8 4"><path d="M0 4l4-4 4 4z" fill="#777" /></svg>
          <svg width="8" height="4" viewBox="0 0 8 4"><path d="M0 0l4 4 4-4z" fill="#777" /></svg>
        </div>
      </div>
      <div className="mt-[7px] flex flex-1 flex-col border border-t-white border-r-[#9c9c9c] border-b-white border-l-white pt-[3px] pr-2 pl-[2px]">
        <label htmlFor="note-person" className="whitespace-nowrap">Estner Jürgen, 2...</label>
        <input id="note-person" className={`h-[17px] w-full bg-[#b9cab9] outline-none ${SUNKEN}`} />
        <label htmlFor="note-day" className="mt-[6px] whitespace-nowrap">Tagesnotiz für 22...</label>
        <input id="note-day" className={`h-[17px] w-full bg-[#b9b9cc] outline-none ${SUNKEN}`} />
      </div>
    </div>
    <div className="mt-[2px] flex h-7 w-32 shrink-0">
      <button aria-label="Austritt" className={`flex w-8 items-center justify-center bg-[#c4c4c4] ${RAISED}`}><IconDoor /></button>
      <button aria-label="Person" className={`flex w-8 items-center justify-center bg-[#c4c4c4] ${RAISED}`}><IconMan /></button>
      <button aria-label="Löschen" className={`flex w-8 items-center justify-center bg-[#e0e0e0] ${RAISED}`}><IconTrash /></button>
      <button aria-label="Alle löschen" className={`flex w-8 items-center bg-[#e0e0e0] pl-[3px] ${RAISED}`}><IconTrashes /></button>
    </div>
  </aside>
);

/* ---------- bottom area ---------- */

const COUNT = 'pt-px leading-[13px]';

const countClass = (shift: string, day: number) => {
  if (shift.startsWith('F1') && day === 22) return 'bg-[#3399f3] text-white';
  if (shift.startsWith('S1') && (day === 16 || day === 17)) return 'bg-[#f0a8a8]';
  if (shift.startsWith('Fehl') && [12, 16, 17].includes(day)) return 'bg-[#c2e0f4]';
  return 'bg-[#f4f4f4]';
};

const countValue = (shift: (typeof shifts)[number], day: number) => {
  if (shift.label.startsWith('S1') && (day === 16 || day === 17)) return 2;
  if (shift.label.startsWith('Fehl') && [12, 16, 17].includes(day)) return 1;
  return dayKind(day) === 'work' ? shift.week : shift.weekend;
};

const ShiftCounts = () => (
  <section className="min-w-0 flex-1">
    <table className={TABLE}>
      <RosterCols name="w-[105px]" />
      <tbody>
        {shifts.map((s) => (
          <tr key={s.label}>
            <td className={`${CELL} ${COUNT} h-4 pl-px ${s.color}`}>{s.label}</td>
            <td className={`${CELL} ${s.prev}`} />
            {DAYS.map((d) => (
              <td key={d} className={`${CELL} ${COUNT} pl-[2px] ${countClass(s.label, d)}`}>{countValue(s, d)}</td>
            ))}
            <td className={`${CELL} ${COUNT} pl-[2px] ${s.next}`}>0</td>
          </tr>
        ))}
      </tbody>
    </table>
    <DateFooter title="Dienst" name="w-[105px]" />
  </section>
);

const StaffChart = () => {
  const w = 344;
  const unit = 10.35;
  const base = 128;
  const x = (h: number) => (h / 24) * w;
  const y = (v: number) => base - v * unit;
  let line = '';
  staffing.forEach(([h, v], i) => {
    line += i === 0 ? `M${x(h)} ${y(v)}` : `H${x(h)}V${y(v)}`;
  });
  line += `H${w}`;
  return (
    <section className="flex w-[366px] shrink-0 flex-col border-l border-[#9c9c9c] bg-[#eaeaea] pr-px pl-[2px] text-[11px]">
      <h2 className="h-[15px] font-['Roboto',sans-serif] leading-[15px] whitespace-nowrap">Personalstärken am 22.10.2013&nbsp; Soll = 149:36, Ist = 104:12 Std.</h2>
      <div className="flex">
        <div className="grid w-[18px] shrink-0 grid-rows-5 items-center justify-items-end pt-[14px] pr-[5px] pb-[13px]">
          {[10, 8, 6, 4, 2].map((n) => <span key={n} className="leading-3">{n}</span>)}
        </div>
        <svg className="h-[131px] min-w-0 flex-1 overflow-visible" viewBox="0 0 344 131" preserveAspectRatio="none" shapeRendering="crispEdges">
          <rect width={w} height={base} fill="#000" />
          {[2, 4, 6, 8, 10].map((n) => <path key={n} d={`M-4 ${y(n)}H${w}`} stroke="#5c5c5c" />)}
          <path d={`${line}V${base}H0z`} fill="#336393" />
          <path d={line} fill="none" stroke="#fff" />
          {Array.from({ length: 24 }, (_, i) => <path key={i} d={`M${x(i)} ${base}v2`} stroke="#222" />)}
          <path d={`M-4 ${base}H${w}`} stroke="#222" />
        </svg>
      </div>
      <div className="grid grid-cols-12 pr-[13px] pl-[5px] text-center leading-[11px]">
        {Array.from({ length: 12 }, (_, i) => <span key={i}>{pad(i * 2)}</span>)}
      </div>
      <div className="h-[9px] bg-black" />
    </section>
  );
};

export default function App() {
  return (
    <div className="flex h-screen w-full flex-col overflow-hidden bg-[#aecde8] font-['Liberation_Sans',Arial,sans-serif] text-[12px] text-black">
      <TitleBar />
      <main className="mx-2 mb-[7px] flex min-h-0 flex-1 flex-col border border-[#5c6b80] bg-[#f4f4f4]">
        <nav className="flex h-5 shrink-0 items-center border-b border-[#b4b4b4] bg-linear-to-b from-white to-[#dae3f0] font-['Open_Sans',sans-serif] text-[11px]">
          {menuItems.map((item) => (
            <button key={item} className="px-[7px]">{item}</button>
          ))}
        </nav>
        <div className="flex min-h-0 flex-1">
          <div className="flex min-w-0 flex-1 flex-col bg-[#d0d0d0]">
            <Toolbar />
            <Filters />
            <div className="flex min-h-0 flex-1">
              <Roster />
              <div className="flex flex-col bg-[#e9e9e9] pb-[17px]">
                <div className="flex min-h-0 flex-1"><Scrollbar vertical parts={[50, 129, 224]} /></div>
              </div>
              <div className="w-[7px] shrink-0 border-r border-l border-[#9c9c9c] bg-[#e9e9e9]" />
              <Hours />
            </div>
          </div>
          <Sidebar />
        </div>
        <div className="flex h-4 shrink-0">
          <div className="w-[89px] border-r-2 border-[#b0b0b0]" />
        </div>
        <div className="flex shrink-0">
          <ShiftCounts />
          <Scrollbar vertical parts={[0, 70, 66]} />
          <StaffChart />
        </div>
      </main>
    </div>
  );
}
